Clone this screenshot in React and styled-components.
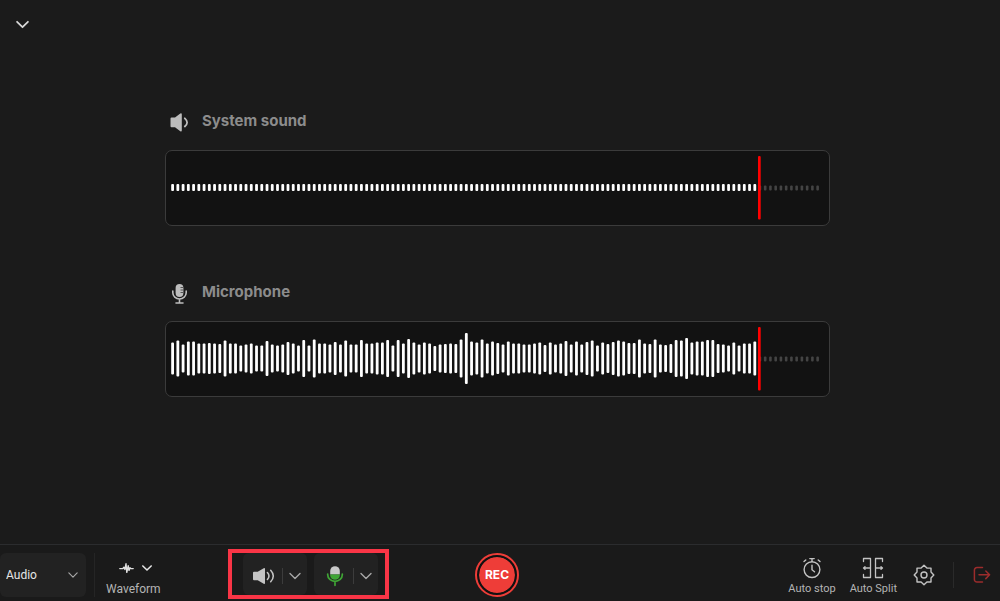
import React from 'react'
import styled, { createGlobalStyle } from 'styled-components'

const GlobalStyle = createGlobalStyle`
  *, *::before, *::after { box-sizing: border-box; }
  body {
    margin: 0;
    background: #1b1b1b;
    color: #d6d6d6;
    font-family: Inter, "Noto Sans", sans-serif;
  }
  button, select { font: inherit; color: inherit; }
`

const Page = styled.div`
  display: flex;
  flex-direction: column;
  min-height: 100vh;
`

const TopBar = styled.header`
  display: flex;
  padding: 12px 10px;
`

const PlainButton = styled.button`
  display: flex;
  align-items: center;
  justify-content: center;
  margin: 0;
  padding: 0;
  border: 0;
  background: none;
  cursor: pointer;
`

const CollapseButton = styled(PlainButton)`
  width: 24px;
  height: 24px;
`

const Tracks = styled.main`
  flex: 1;
  display: flex;
  flex-direction: column;
  align-items: center;
  gap: 54px;
  padding: 61px 5px 61px 0;
`

const Track = styled.section`
  width: 100%;
  max-width: 665px;
`

const TrackHeader = styled.div`
  display: flex;
  align-items: center;
  gap: 12px;
  height: 24px;
  margin-bottom: 17px;
  padding-left: 5px;
`

const TrackTitle = styled.h2`
  margin: 0;
  color: #8c8c8c;
  font-size: 15px;
  font-weight: 700;
  line-height: 24px;
`

const Panel = styled.div`
  border: 1px solid #3b3b3b;
  border-radius: 7px;
  background: #121212;

  svg {
    display: block;
    width: 100%;
    height: auto;
  }
`

const Toolbar = styled.footer`
  display: grid;
  grid-template-columns: 1fr auto 1fr;
  align-items: center;
  height: 57px;
  padding: 3px 6px 0 0;
  border-top: 1px solid #2b2c2e;
  background: #1a1a1a;
`

const ToolsLeft = styled.div`
  display: flex;
  align-items: center;
`

const ToolsRight = styled.div`
  display: flex;
  align-items: center;
  justify-content: flex-end;
`

const SelectWrap = styled.label`
  display: grid;
  align-items: center;
  width: 86px;
  height: 44px;
  margin-right: 8px;

  select, svg { grid-area: 1 / 1; }
  svg {
    justify-self: end;
    margin-right: 8px;
    pointer-events: none;
  }
`

const ModeSelect = styled.select`
  appearance: none;
  width: 100%;
  height: 100%;
  padding: 0 24px 0 6px;
  border: 0;
  border-radius: 6px;
  background: #222;
  color: #e6e6e6;
  font-family: Roboto, sans-serif;
  font-size: 12px;
`

const Divider = styled.span`
  width: 1px;
  height: ${p => p.$height || 16}px;
  background: ${p => p.$color || '#3c3c3c'};
`

const Tool = styled(PlainButton)`
  flex-direction: column;
  padding-top: 2px;
  color: #b4b4b4;
  font-family: Roboto, sans-serif;
  font-size: ${p => p.$size || 11}px;
  line-height: 16px;
  white-space: nowrap;
`

const ToolIcons = styled.span`
  display: flex;
  align-items: center;
  gap: 8px;
  height: 26px;
`

const WaveformTool = styled(Tool)`
  margin: 0 67px 0 11px;

  ${ToolIcons} { padding-left: 4px; }
`

const LabelledTools = styled.div`
  display: flex;
  gap: 14px;
`

const Highlight = styled.div`
  display: flex;
  gap: 7px;
  margin-bottom: 2px;
  padding: 0 7px 0 11px;
  border: 4px solid #f93546;
`

const Device = styled.div`
  display: flex;
  align-items: center;
  height: 42px;
  padding-top: 4px;
  border-radius: 6px;
  background: #222;
`

const DeviceToggle = styled(PlainButton)`
  width: 39px;
  height: 38px;
  padding-left: 3px;
`

const DeviceMenu = styled(PlainButton)`
  width: 24px;
  height: 38px;
`

const RecordButton = styled.button`
  width: 44px;
  height: 44px;
  padding: 2px;
  border: 2px solid #ee3d38;
  border-radius: 50%;
  background: #ee3d38;
  background-clip: content-box;
  box-shadow: inset 0 0 0 2px #111;
  color: #fff;
  font-size: 12px;
  font-weight: 700;
  text-align: center;
  cursor: pointer;
`

const SettingsButton = styled(PlainButton)`
  width: 22px;
  height: 44px;
  margin: 0 18px 0 16px;
`

const ExitButton = styled(PlainButton)`
  width: 18px;
  height: 44px;
  margin: 0 3px 0 19px;
`

const micLevels = [
  32, 36, 28, 34, 34, 30, 30, 31, 30, 29, 36, 30, 30, 26, 28, 30,
  26, 26, 35, 28, 26, 28, 33, 30, 26, 37, 26, 38, 30, 30, 28, 33,
  28, 36, 28, 28, 37, 30, 30, 32, 32, 37, 26, 37, 30, 39, 32, 28,
  32, 30, 25, 28, 29, 30, 29, 38, 51, 34, 32, 38, 30, 34, 31, 28,
  34, 30, 30, 28, 28, 30, 32, 27, 32, 28, 30, 35, 28, 34, 28, 33,
  36, 26, 32, 29, 33, 36, 34, 31, 31, 38, 30, 29, 38, 28, 27, 29,
  37, 36, 41, 32, 34, 34, 37, 37, 29, 28, 26, 32, 26, 30, 30, 34,
]

const systemLevels = micLevels.map(() => 7)

const SLOTS = 124
const STEP = 5.245

const Wave = ({ levels, label }) => (
  <Panel>
    <svg viewBox="0 0 663 74" role="img" aria-label={label}>
      {Array.from({ length: SLOTS }, (_, i) => {
        const active = i < levels.length
        const h = active ? levels[i] : 5
        return (
          <rect
            key={i}
            x={5.2 + i * STEP}
            y={(active ? 36.6 : 37) - h / 2}
            width={active ? 2.8 : 2.6}
            height={h}
            rx="1"
            fill={active ? '#fff' : '#444'}
          />
        )
      })}
      <rect x="592" y="5" width="2.7" height="63.5" rx="1" fill="#f00" />
    </svg>
  </Panel>
)

const Chevron = ({ width = 11, color = '#a8a8a8', stroke = 1.4 }) => (
  <svg width={width} height={width} viewBox="0 0 12 12" fill="none" stroke={color} strokeWidth={stroke} strokeLinecap="round" strokeLinejoin="round" aria-hidden="true">
    <path d="M1 3.5 6 8.5l5-5" />
  </svg>
)

const SpeakerIcon = () => (
  <svg width="20" height="24" viewBox="0 0 20 24" aria-hidden="true">
    <path d="M1.5 8.5H5l5.3-4a1 1 0 0 1 1.5.8v16.2a1 1 0 0 1-1.5.8l-5.3-4H1.5a1 1 0 0 1-1-1v-7.8a1 1 0 0 1 1-1Z" fill="#bdbdbd" />
    <path d="M14.8 9.3q4.6 4.1 0 8.2" fill="none" stroke="#bdbdbd" strokeWidth="1.8" strokeLinecap="round" />
  </svg>
)

const MicIcon = () => (
  <svg width="20" height="24" viewBox="0 0 20 24" fill="none" aria-hidden="true">
    <rect x="5.6" y="4" width="7.8" height="13" rx="3.9" fill="#bdbdbd" />
    <path d="M10.5 7.5h3M10.5 10h3M10.5 12.5h3" stroke="#555" strokeWidth="1" />
    <path d="M2.8 11v1.8a6.7 6.2 0 0 0 13.4 0V11M9.5 19v3.5M6 23h7" stroke="#bdbdbd" strokeWidth="1.6" strokeLinecap="round" />
  </svg>
)

const VolumeIcon = () => (
  <svg width="23" height="18" viewBox="0 0 23 18" aria-hidden="true">
    <path d="M2 4.7h3.7l6-3.5a.9.9 0 0 1 1.3.8v14a.9.9 0 0 1-1.3.8l-6-3.5H2a1 1 0 0 1-1-1V5.7a1 1 0 0 1 1-1Z" fill="#c4c4c4" />
    <path d="M15.4 5.5q3.2 3.5 0 7M18.7 3.3q5.2 5.7 0 11.4" fill="none" stroke="#c4c4c4" strokeWidth="1.5" strokeLinecap="round" />
  </svg>
)

const LiveMicIcon = () => (
  <svg width="18" height="22" viewBox="0 0 18 22" fill="none" aria-hidden="true">
    <path d="M4.2 9.5V6a4.8 4.8 0 0 1 9.6 0v3.5Z" fill="#c9c9c9" />
    <path d="M4.2 9.5h9.6v1a4.8 4.3 0 0 1-9.6 0Z" fill="#3fa535" />
    <path d="M1.7 9v.8a7.3 6.6 0 0 0 14.6 0V9M9 16.5v3.8" stroke="#3fa535" strokeWidth="1.7" strokeLinecap="round" />
  </svg>
)

const WaveformIcon = () => (
  <svg width="15" height="14" viewBox="0 0 15 14" fill="none" stroke="#e0e0e0" strokeWidth="1.4" strokeLinecap="round" strokeLinejoin="round" aria-hidden="true">
    <path d="M.8 7.6h3l1.1-1.4 1 2.2L7 2.8l.8 8.6 1.4-6.6.8 4.6 1-2.6.8.8h2.4" />
  </svg>
)

const StopwatchIcon = () => (
  <svg width="20" height="22" viewBox="0 0 20 22" fill="none" stroke="#c2c2c2" strokeWidth="1.4" strokeLinecap="round" strokeLinejoin="round" aria-hidden="true">
    <circle cx="10" cy="12.6" r="7.9" />
    <path d="M7.8 1.6h4.4M10 1.6v3M10 8.2v4.6l2.5 2M2 4.6l1.8-1.7M18 4.6l-1.8-1.7" />
  </svg>
)

const SplitIcon = () => (
  <svg width="22" height="22" viewBox="0 0 22 22" fill="none" stroke="#c2c2c2" strokeWidth="1.3" strokeLinecap="round" strokeLinejoin="round" aria-hidden="true">
    <path d="M1.5 4.5v-3h7v19h-7v-3M20.5 4.5v-3h-7v19h7v-3" />
    <path d="M1.5 11h6.3M3 9.7 1.5 11 3 12.3M13.8 11h6.7M19 9.7l1.5 1.3-1.5 1.3" />
  </svg>
)

const GearIcon = () => (
  <svg width="22" height="22" viewBox="0 0 22 22" fill="none" stroke="#c2c2c2" strokeWidth="1.4" strokeLinejoin="round" aria-hidden="true">
    <path d="m11 1.2 2.9 2.9H18V8l2.8 3-2.8 3v4h-4.1L11 20.8 8.1 18H4v-4l-2.8-3L4 8V4.1h4.1Z" />
    <circle cx="11" cy="11" r="3" />
  </svg>
)

const ExitIcon = () => (
  <svg width="18" height="18" viewBox="0 0 18 18" fill="none" stroke="#9c2c2c" strokeWidth="1.5" strokeLinecap="round" strokeLinejoin="round" aria-hidden="true">
    <path d="M9.5 1.6H4a2.6 2.6 0 0 0-2.6 2.6v9.2A2.6 2.6 0 0 0 4 16h5.5M6 8.8h10.5M12.8 5l3.8 3.8-3.8 3.8" />
  </svg>
)

const App = () => (
  <>
    <GlobalStyle />
    <Page>
      <TopBar>
        <CollapseButton aria-label="Collapse">
          <Chevron width={13} color="#d8d8d8" stroke={1.6} />
        </CollapseButton>
      </TopBar>

      <Tracks>
        <Track>
          <TrackHeader>
            <SpeakerIcon />
            <TrackTitle>System sound</TrackTitle>
          </TrackHeader>
          <Wave levels={systemLevels} label="System sound level" />
        </Track>
        <Track>
          <TrackHeader>
            <MicIcon />
            <TrackTitle>Microphone</TrackTitle>
          </TrackHeader>
          <Wave levels={micLevels} label="Microphone level" />
        </Track>
      </Tracks>

      <Toolbar>
        <ToolsLeft>
          <SelectWrap>
            <ModeSelect aria-label="Recording mode" defaultValue="audio">
              <option value="audio">Audio</option>
            </ModeSelect>
            <Chevron width={10} />
          </SelectWrap>
          <Divider $height={44} $color="#252525" />
          <WaveformTool $size={12}>
            <ToolIcons>
              <WaveformIcon />
              <Chevron width={10} color="#e6e6e6" stroke={1.8} />
            </ToolIcons>
            Waveform
          </WaveformTool>
          <Highlight>
            <Device>
              <DeviceToggle aria-label="System sound"><VolumeIcon /></DeviceToggle>
              <Divider />
              <DeviceMenu aria-label="System sound options"><Chevron width={12} /></DeviceMenu>
            </Device>
            <Device>
              <DeviceToggle aria-label="Microphone"><LiveMicIcon /></DeviceToggle>
              <Divider />
              <DeviceMenu aria-label="Microphone options"><Chevron width={12} /></DeviceMenu>
            </Device>
          </Highlight>
        </ToolsLeft>

        <RecordButton>REC</RecordButton>

        <ToolsRight>
          <LabelledTools>
            <Tool>
              <ToolIcons><StopwatchIcon /></ToolIcons>
              Auto stop
            </Tool>
            <Tool>
              <ToolIcons><SplitIcon /></ToolIcons>
              Auto Split
            </Tool>
          </LabelledTools>
          <SettingsButton aria-label="Settings"><GearIcon /></SettingsButton>
          <Divider $height={26} $color="#2a2a2a" />
          <ExitButton aria-label="Exit"><ExitIcon /></ExitButton>
        </ToolsRight>
      </Toolbar>
    </Page>
  </>
)

export default App
